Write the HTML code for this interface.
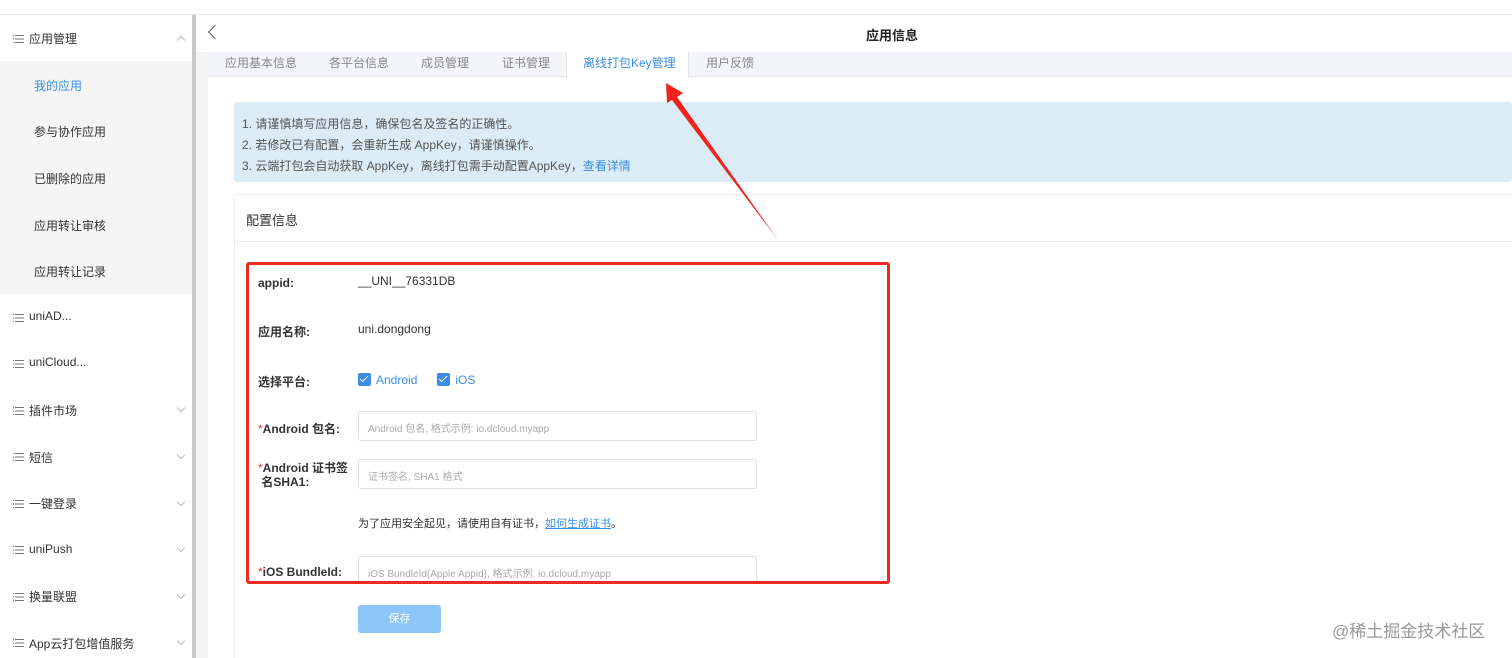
<!DOCTYPE html>
<html><head><meta charset="utf-8"><style>
*{margin:0;padding:0;box-sizing:border-box}
html,body{width:1512px;height:658px;overflow:hidden}
body{background:#fff;font-family:"Liberation Sans","Noto Sans CJK SC",sans-serif;color:#333;position:relative}
.a{position:absolute;white-space:nowrap}
.mi{font-size:12px;color:#333}
.ico{position:absolute;width:11px;height:8px;background:linear-gradient(#777 0 1px,transparent 1px 3.5px,#777 3.5px 4.5px,transparent 4.5px 7px,#777 7px 8px);}
.ico:before{content:"";position:absolute;left:0;top:0;width:2px;height:8px;background:#fff;}
.ico:after{content:"";position:absolute;left:0;top:0;width:1px;height:8px;background:linear-gradient(#777 0 1px,transparent 1px 3.5px,#777 3.5px 4.5px,transparent 4.5px 7px,#777 7px 8px)}
.chev{width:6px;height:6px;border-right:1px solid #bbb;border-bottom:1px solid #bbb;transform:rotate(45deg)}
.lab{font-size:12px;font-weight:bold;color:#333}
.inp{position:absolute;left:358px;width:399px;height:30px;border:1px solid #dcdfe6;border-radius:3px;font-size:10px;color:#aaa;padding:8px 9px;white-space:nowrap}
.cb{display:inline-block;width:13px;height:13px;background:#3a8ee6;border-radius:2px;vertical-align:-2px;position:relative;margin-right:5px}
.cb:after{content:"";position:absolute;left:4px;top:1px;width:3px;height:7px;border-right:1.5px solid #fff;border-bottom:1.5px solid #fff;transform:rotate(45deg)}
.star{color:#e33;font-weight:normal}
.tab{font-size:12px;color:#888;top:54px}
</style></head><body>
<div class="a" style="left:0;top:14px;width:1512px;height:1px;background:#e8e8e8"></div>
<div class="a" style="left:192px;top:15px;width:4px;height:643px;background:#c8c8c8"></div>
<div class="a" style="left:0;top:61px;width:192px;height:233px;background:#f5f5f5"></div>
<div class="ico" style="left:13px;top:35px"></div><div class="a mi" style="left:29px;top:30px">应用管理</div>
<div class="a chev" style="left:178px;top:37px;transform:rotate(-135deg)"></div>
<div class="a mi" style="left:34px;top:77px;color:#3a8ee6">我的应用</div>
<div class="a mi" style="left:34px;top:123px">参与协作应用</div>
<div class="a mi" style="left:34px;top:170px">已删除的应用</div>
<div class="a mi" style="left:34px;top:217px">应用转让审核</div>
<div class="a mi" style="left:34px;top:263px">应用转让记录</div>
<div class="ico" style="left:13px;top:314px"></div><div class="a mi" style="left:29px;top:309px">uniAD...</div>
<div class="ico" style="left:13px;top:360px"></div><div class="a mi" style="left:29px;top:355px">uniCloud...</div>
<div class="ico" style="left:13px;top:407px"></div><div class="a mi" style="left:29px;top:402px">插件市场</div><div class="a chev" style="left:178px;top:405px"></div>
<div class="ico" style="left:13px;top:453px"></div><div class="a mi" style="left:29px;top:449px">短信</div><div class="a chev" style="left:178px;top:452px"></div>
<div class="ico" style="left:13px;top:500px"></div><div class="a mi" style="left:29px;top:495px">一键登录</div><div class="a chev" style="left:178px;top:499px"></div>
<div class="ico" style="left:13px;top:546px"></div><div class="a mi" style="left:29px;top:542px">uniPush</div><div class="a chev" style="left:178px;top:545px"></div>
<div class="ico" style="left:13px;top:593px"></div><div class="a mi" style="left:29px;top:588px">换量联盟</div><div class="a chev" style="left:178px;top:592px"></div>
<div class="ico" style="left:13px;top:639px"></div><div class="a mi" style="left:29px;top:635px">App云打包增值服务</div><div class="a chev" style="left:178px;top:638px"></div>
<div class="a" style="left:210px;top:27px;width:10px;height:10px;border-left:1.5px solid #555;border-bottom:1.5px solid #555;transform:rotate(45deg)"></div>
<div class="a" style="left:866px;top:25px;font-size:13px;font-weight:bold;color:#222">应用信息</div>
<div class="a" style="left:196px;top:52px;width:12px;height:606px;background:#f4f4f5"></div>
<div class="a" style="left:208px;top:52px;width:1304px;height:25px;background:#f4f5f8;border-bottom:1px solid #e8e8e8"></div>
<div class="a" style="left:566px;top:52px;width:123px;height:26px;background:#fff;border-left:1px solid #e4e4e4;border-right:1px solid #e4e4e4"></div>
<div class="a tab" style="left:225px">应用基本信息</div>
<div class="a tab" style="left:329px">各平台信息</div>
<div class="a tab" style="left:421px">成员管理</div>
<div class="a tab" style="left:502px">证书管理</div>
<div class="a tab" style="left:583px;color:#3a8ee6">离线打包Key管理</div>
<div class="a tab" style="left:706px">用户反馈</div>
<div class="a" style="left:234px;top:102px;width:1278px;height:80px;background:#dbecf6;border-radius:3px"></div>
<div class="a" style="left:242px;top:114px;font-size:12px;color:#555;line-height:21px">1. 请谨慎填写应用信息，确保包名及签名的正确性。<br>2. 若修改已有配置，会重新生成 AppKey，请谨慎操作。<br>3. 云端打包会自动获取 AppKey，离线打包需手动配置AppKey，<span style="color:#3a8ee6">查看详情</span></div>
<div class="a" style="left:234px;top:194px;width:1290px;height:470px;border:1px solid #ececec;border-radius:3px"></div>
<div class="a" style="left:246px;top:210px;font-size:13px;color:#333">配置信息</div>
<div class="a" style="left:235px;top:241px;width:1277px;height:1px;background:#eee"></div>
<div class="a lab" style="left:258px;top:276px">appid:</div>
<div class="a" style="left:358px;top:274px;font-size:12px">__UNI__76331DB</div>
<div class="a lab" style="left:258px;top:323px">应用名称:</div>
<div class="a" style="left:358px;top:322px;font-size:12px">uni.dongdong</div>
<div class="a lab" style="left:258px;top:373px">选择平台:</div>
<div class="a" style="left:358px;top:373px;font-size:12px;color:#3a8ee6"><span class="cb"></span>Android<span style="display:inline-block;width:20px"></span><span class="cb"></span>iOS</div>
<div class="a lab" style="left:258px;top:420px"><span class="star">*</span>Android 包名:</div>
<div class="inp" style="top:411px">Android 包名, 格式示例: io.dcloud.myapp</div>
<div class="a lab" style="left:258px;top:461px;line-height:14px"><span class="star">*</span>Android 证书签<br>&nbsp;名SHA1:</div>
<div class="inp" style="top:459px">证书签名, SHA1 格式</div>
<div class="a" style="left:358px;top:515px;font-size:11px;color:#333">为了应用安全起见，请使用自有证书，<span style="color:#3a8ee6;text-decoration:underline">如何生成证书</span>。</div>
<div class="a lab" style="left:258px;top:565px"><span class="star">*</span>iOS BundleId:</div>
<div class="inp" style="top:556px;height:26px;border-bottom:none">iOS BundleId(Apple Appid), 格式示例: io.dcloud.myapp</div>
<div class="a" style="left:246px;top:262px;width:644px;height:322px;border:3px solid #ee2a24;border-radius:3px"></div>
<div class="a" style="left:358px;top:605px;width:83px;height:28px;background:#8cc5f7;border-radius:3px;color:#fff;font-size:11px;text-align:center;line-height:28px">保存</div>
<div class="a" style="left:1332px;top:617px;font-size:17px;color:#999">@稀土掘金技术社区</div>
<svg class="a" style="left:0;top:0" width="1512" height="658"><polygon points="666,83 683,93 677,97 778,240 672,100 667,103" fill="#f2231d"/></svg>
</body></html>
